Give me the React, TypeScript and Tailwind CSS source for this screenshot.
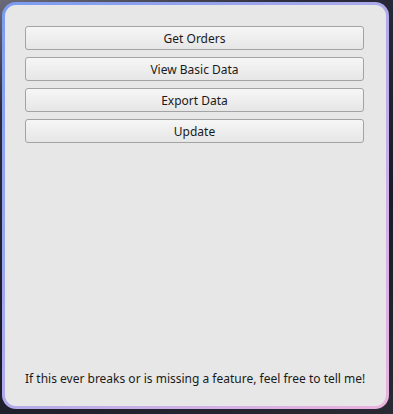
import React from 'react';

const actions = ['Get Orders', 'View Basic Data', 'Export Data', 'Update'];

const App: React.FC = () => {
  return (
    <div
      className="w-[393px] h-[414px] overflow-hidden bg-[linear-gradient(160deg,#6a6a78_0%,#2a2a3a_20%,#1a1a28_60%,#2a2a34_100%)]"
      style={{ fontFamily: '"Noto Sans", "Open Sans", sans-serif' }}
    >
      <div className="ml-[2px] mt-[2px] w-[387px] h-[407px] rounded-[14px] p-[3px] bg-[linear-gradient(135deg,#7a9cf2_0%,#a9a9ea_45%,#d0b0e6_75%,#ebb2df_100%)]">
        <div className="h-full rounded-[11px] bg-[#e7e7e7] flex flex-col pl-[20px] pr-[22px] pt-[21px] pb-[18px]">
          <div className="flex flex-col gap-[7px]">
            {actions.map(label => (
              <button
                key={label}
                className="h-[24px] w-full rounded-[3px] border border-[#a3a3a3] bg-[linear-gradient(#f6f6f6,#e6e6e6)] text-[12px] text-[#1a1a1a] leading-none pt-[1px]"
              >
                {label}
              </button>
            ))}
          </div>
          <div className="mt-auto whitespace-nowrap text-[12px] text-[#1a1a1a] leading-[18px]">
            If this ever breaks or is missing a feature, feel free to tell me!
          </div>
        </div>
      </div>
    </div>
  );
};

export default App;
